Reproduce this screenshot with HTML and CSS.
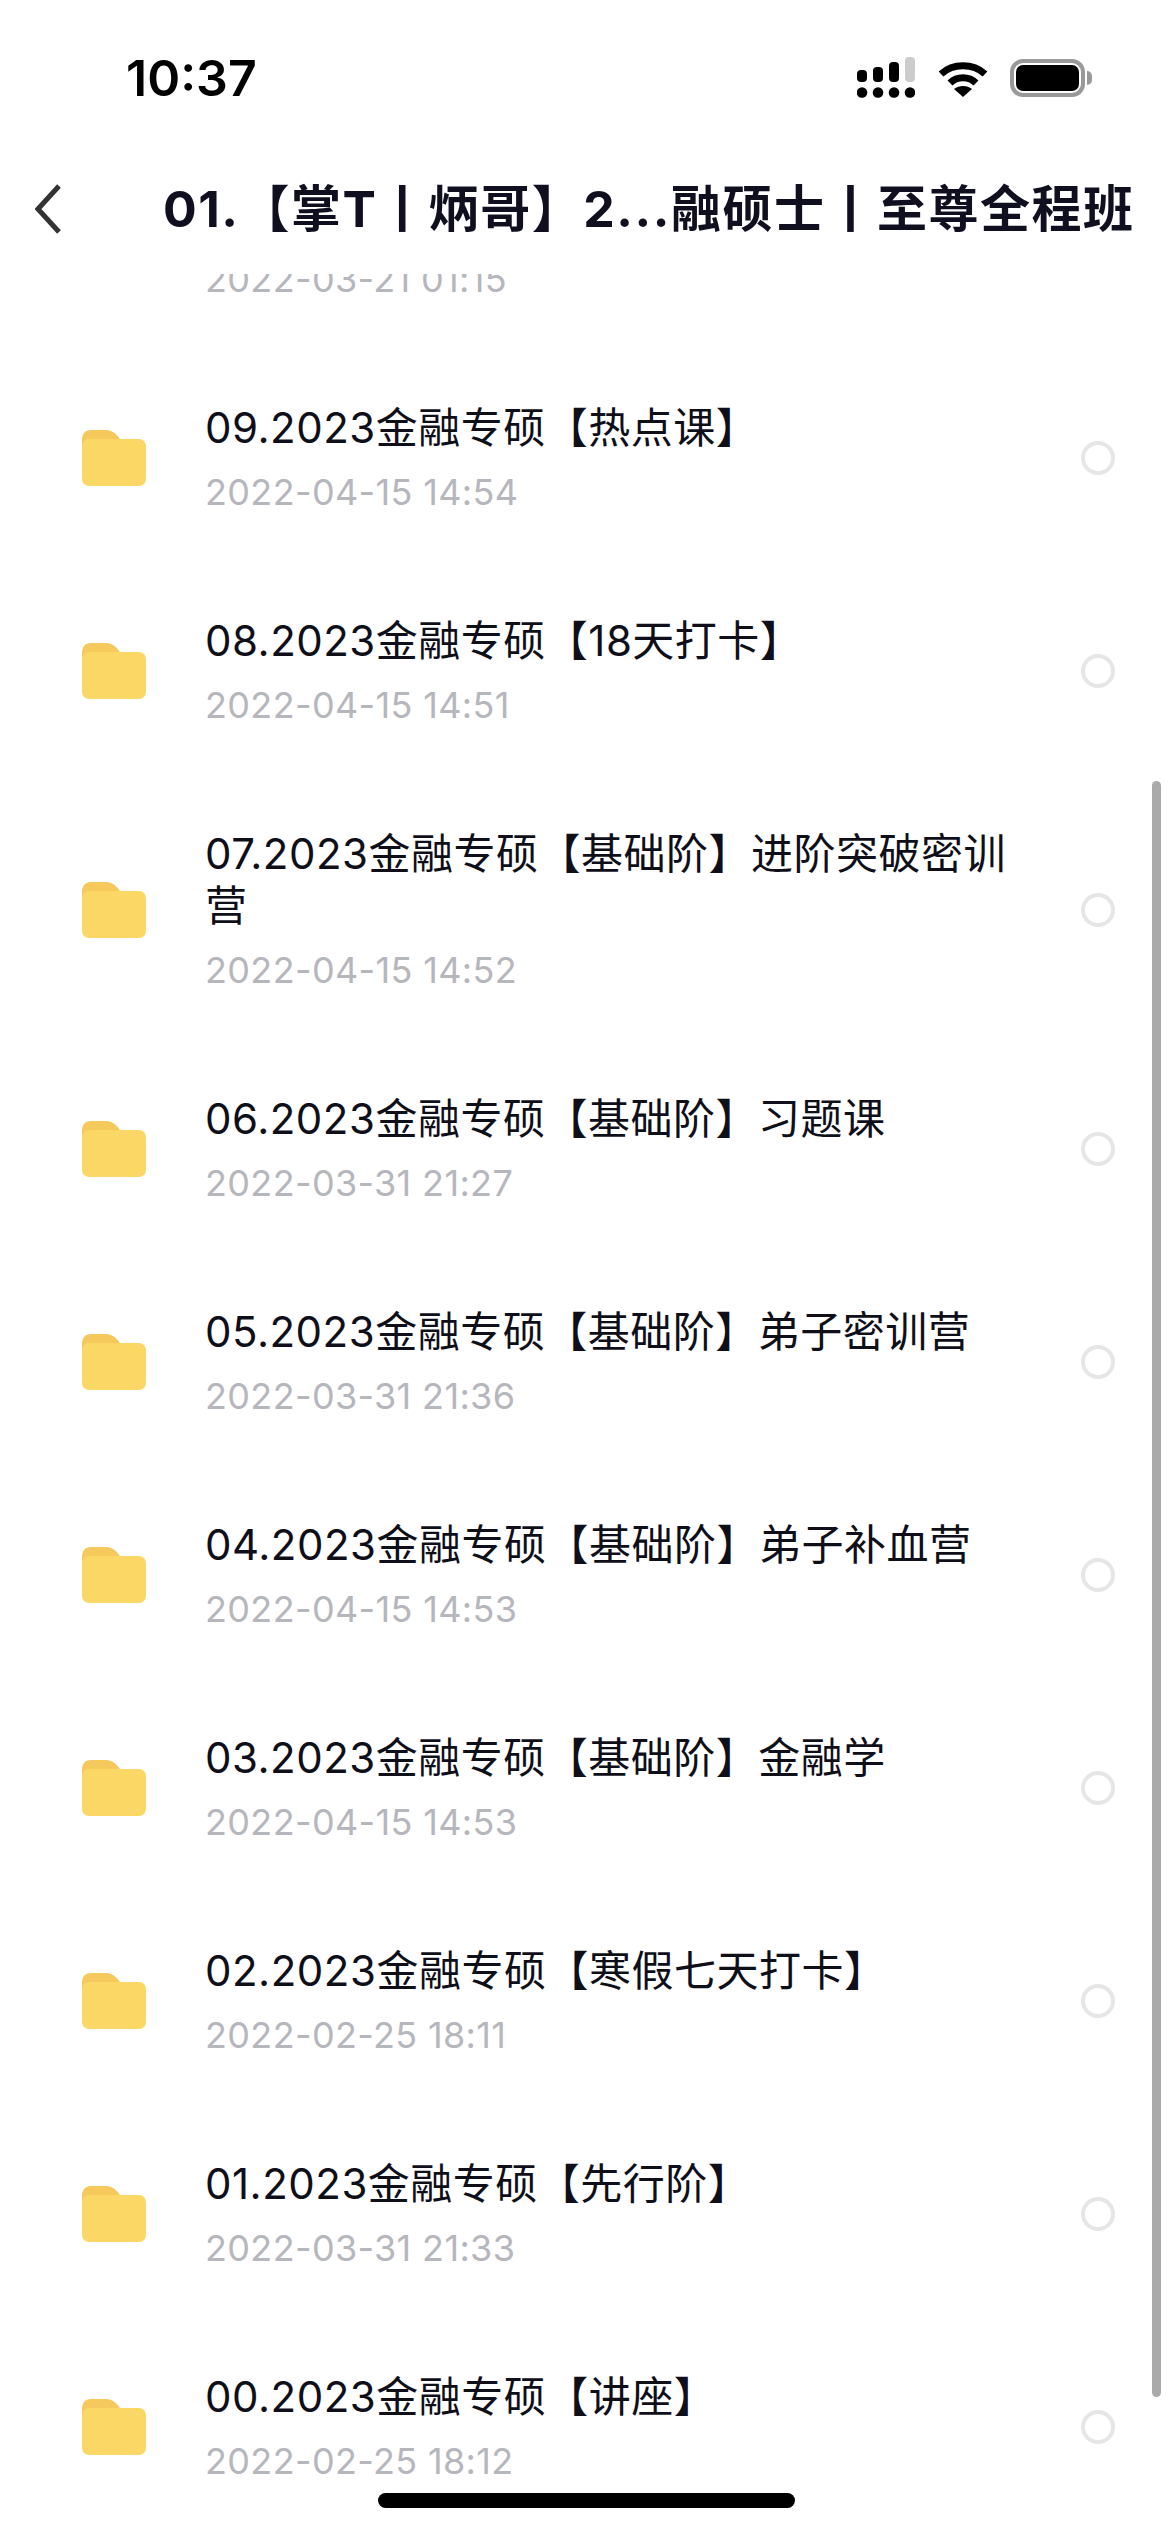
FILE: index.html
```html
<!DOCTYPE html>
<html lang="zh-CN">
<head>
<meta charset="UTF-8" />
<meta name="viewport" content="width=device-width, initial-scale=1" />
<title>01.【掌T丨炳哥】2...融硕士丨至尊全程班</title>
<link rel="stylesheet" href="styles.css">
</head>
<body>

<div class="status-bar">
  <span class="clock">10:37</span>
  <div class="status-icons">
    <svg class="signal" width="58" height="42" viewBox="0 0 58 42">
      <rect x="0" y="13" width="10" height="12" rx="4" fill="#000"/>
      <rect x="16" y="10" width="10" height="15" rx="4" fill="#000"/>
      <rect x="32" y="5" width="10" height="20" rx="4" fill="#000"/>
      <rect x="48" y="0" width="10" height="25" rx="4" fill="#ccc"/>
      <circle cx="5" cy="35.5" r="5.3" fill="#000"/>
      <circle cx="21" cy="35.5" r="5.3" fill="#000"/>
      <circle cx="37" cy="35.5" r="5.3" fill="#000"/>
      <circle cx="53" cy="35.5" r="5.3" fill="#000"/>
    </svg>
    <svg class="wifi" width="50" height="38" viewBox="0 0 50 38">
      <path d="M3 15 C15 4 35 4 47 15" fill="none" stroke="#000" stroke-width="7"/>
      <path d="M12 24 C19 17 31 17 38 24" fill="none" stroke="#000" stroke-width="7"/>
      <path d="M25 38 L16 30 C21 26 29 26 34 30 Z" fill="#000"/>
    </svg>
    <div class="battery"><div class="battery-fill"></div></div>
    <div class="battery-nub"></div>
  </div>
</div>

<header class="nav-bar">
  <svg class="back" width="26" height="50" viewBox="0 0 26 50">
    <path d="M24 2 L3 25 L24 48" fill="none" stroke="#333" stroke-width="5"/>
  </svg>
  <h1>01.【掌T丨炳哥】2...融硕士丨至尊全程班</h1>
</header>

<main class="file-list">
  <div class="row first">
    <svg class="folder" viewBox="0 0 64 56"><use href="#folder-icon"/></svg>
    <div class="info"><div class="name"></div><div class="date">2022-03-21 01:15</div></div>
    <span class="radio hidden"></span>
  </div>
  <div class="row">
    <svg class="folder" viewBox="0 0 64 56"><use href="#folder-icon"/></svg>
    <div class="info"><div class="name">09.2023金融专硕【热点课】</div><div class="date">2022-04-15 14:54</div></div>
    <span class="radio"></span>
  </div>
  <div class="row">
    <svg class="folder" viewBox="0 0 64 56"><use href="#folder-icon"/></svg>
    <div class="info"><div class="name">08.2023金融专硕【18天打卡】</div><div class="date">2022-04-15 14:51</div></div>
    <span class="radio"></span>
  </div>
  <div class="row">
    <svg class="folder" viewBox="0 0 64 56"><use href="#folder-icon"/></svg>
    <div class="info"><div class="name">07.2023金融专硕【基础阶】进阶突破密训营</div><div class="date">2022-04-15 14:52</div></div>
    <span class="radio"></span>
  </div>
  <div class="row">
    <svg class="folder" viewBox="0 0 64 56"><use href="#folder-icon"/></svg>
    <div class="info"><div class="name">06.2023金融专硕【基础阶】习题课</div><div class="date">2022-03-31 21:27</div></div>
    <span class="radio"></span>
  </div>
  <div class="row">
    <svg class="folder" viewBox="0 0 64 56"><use href="#folder-icon"/></svg>
    <div class="info"><div class="name">05.2023金融专硕【基础阶】弟子密训营</div><div class="date">2022-03-31 21:36</div></div>
    <span class="radio"></span>
  </div>
  <div class="row">
    <svg class="folder" viewBox="0 0 64 56"><use href="#folder-icon"/></svg>
    <div class="info"><div class="name">04.2023金融专硕【基础阶】弟子补血营</div><div class="date">2022-04-15 14:53</div></div>
    <span class="radio"></span>
  </div>
  <div class="row">
    <svg class="folder" viewBox="0 0 64 56"><use href="#folder-icon"/></svg>
    <div class="info"><div class="name">03.2023金融专硕【基础阶】金融学</div><div class="date">2022-04-15 14:53</div></div>
    <span class="radio"></span>
  </div>
  <div class="row">
    <svg class="folder" viewBox="0 0 64 56"><use href="#folder-icon"/></svg>
    <div class="info"><div class="name">02.2023金融专硕【寒假七天打卡】</div><div class="date">2022-02-25 18:11</div></div>
    <span class="radio"></span>
  </div>
  <div class="row">
    <svg class="folder" viewBox="0 0 64 56"><use href="#folder-icon"/></svg>
    <div class="info"><div class="name">01.2023金融专硕【先行阶】</div><div class="date">2022-03-31 21:33</div></div>
    <span class="radio"></span>
  </div>
  <div class="row">
    <svg class="folder" viewBox="0 0 64 56"><use href="#folder-icon"/></svg>
    <div class="info"><div class="name">00.2023金融专硕【讲座】</div><div class="date">2022-02-25 18:12</div></div>
    <span class="radio"></span>
  </div>
</main>

<div class="scroll-thumb"></div>
<div class="home-bar"></div>

<svg class="defs" width="0" height="0">
  <symbol id="folder-icon" viewBox="0 0 64 56">
    <path d="M0 10 C0 4 3 0 9 0 H23 C29 0 33 2 38 9 V20 H0 Z" fill="#f5c95c"/>
    <rect x="0" y="9" width="64" height="47" rx="7" fill="#fbd766"/>
  </symbol>
</svg>

</body>
</html>
```

FILE: styles.css
```css
html, body {
  margin: 0;
  padding: 0;
}
body {
  position: relative;
  width: 1170px;
  height: 2532px;
  overflow: hidden;
  background: #fff;
  color: #0f0f1a;
  font-family: Inter, "Noto Sans CJK SC", sans-serif;
}
.status-bar {
  display: flex;
  justify-content: space-between;
  align-items: center;
  height: 156px;
  padding: 0 78px 0 126px;
  box-sizing: border-box;
}
.clock {
  font-size: 50px;
  font-weight: 600;
  color: #000;
}
.status-icons {
  display: flex;
  align-items: center;
}
.signal {
  margin-right: 23px;
}
.wifi {
  margin-right: 22px;
}
.battery {
  width: 75px;
  height: 38px;
  box-sizing: border-box;
  padding: 2px;
  border: 4px solid #999;
  border-radius: 13px;
}
.battery-fill {
  width: 100%;
  height: 100%;
  background: #000;
  border-radius: 7px;
}
.battery-nub {
  width: 5px;
  height: 14px;
  margin-left: 2px;
  background: #999;
  border-radius: 0 5px 5px 0;
}
.nav-bar {
  display: flex;
  align-items: center;
  height: 118px;
  padding: 0 0 12px 35px;
  box-sizing: border-box;
}
.back {
  flex: none;
}
.nav-bar h1 {
  margin: 0 0 0 102px;
  font-size: 50px;
  font-weight: 700;
  line-height: 60px;
  letter-spacing: 1.5px;
  white-space: nowrap;
  color: #0f0f1f;
}
.file-list {
  height: 2258px;
  overflow: hidden;
}
.row {
  display: flex;
  align-items: center;
  padding: 50px 0 51px 82px;
}
.row.first {
  margin-top: -135px;
}
.folder {
  flex: none;
  width: 64px;
  height: 56px;
}
.info {
  width: 820px;
  margin-left: 59px;
}
.name {
  min-height: 52px;
  font-size: 42px;
  line-height: 52px;
  letter-spacing: 0.5px;
  color: #0f0f1a;
}
.date {
  margin-top: 16px;
  font-size: 36px;
  line-height: 44px;
  letter-spacing: 0.35px;
  color: #b6b6bd;
}
.radio {
  flex: none;
  width: 34px;
  height: 34px;
  margin-left: 56px;
  box-sizing: border-box;
  border: 4.5px solid #e6e6e6;
  border-radius: 50%;
}
.radio.hidden {
  visibility: hidden;
}
.scroll-thumb {
  position: absolute;
  left: 1152px;
  top: 781px;
  width: 9px;
  height: 1616px;
  background: #aaa;
  border-radius: 5px;
}
.home-bar {
  position: absolute;
  left: 378px;
  top: 2493px;
  width: 417px;
  height: 15px;
  background: #000;
  border-radius: 8px;
}
.defs {
  position: absolute;
}
```
